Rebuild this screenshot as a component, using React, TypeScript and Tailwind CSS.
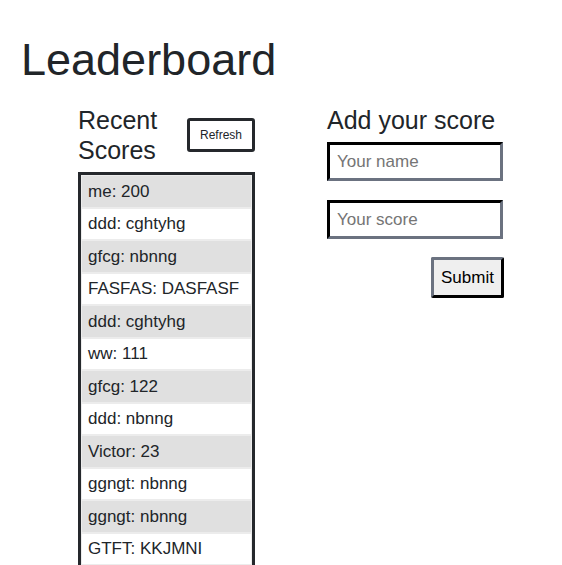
const SCORES = [
  { name: "me", score: "200" },
  { name: "ddd", score: "cghtyhg" },
  { name: "gfcg", score: "nbnng" },
  { name: "FASFAS", score: "DASFASF" },
  { name: "ddd", score: "cghtyhg" },
  { name: "ww", score: "111" },
  { name: "gfcg", score: "122" },
  { name: "ddd", score: "nbnng" },
  { name: "Victor", score: "23" },
  { name: "ggngt", score: "nbnng" },
  { name: "ggngt", score: "nbnng" },
  { name: "GTFT", score: "KKJMNI" },
];

const App = () => {
  return (
    <div
      className="w-full h-[565px] bg-white text-[#212529] pl-[22px] pt-[34px] overflow-hidden"
      style={{ fontFamily: '"Liberation Sans", Arial, sans-serif' }}
    >
      <h1 className="text-[45px] leading-[52px] font-normal -ml-px">Leaderboard</h1>

      <div className="flex gap-[72px] ml-[56px] mt-[19px]">
        {/* recent scores */}
        <div className="w-[177px] flex flex-col">
          <div className="flex items-center justify-between">
            <h2 className="text-[25px] leading-[30px] font-normal">
              Recent
              <br />
              Scores
            </h2>
            <button className="h-[34px] px-[10px] border-[3px] border-[#25282c] rounded-[3px] bg-white text-[12px] text-[#212529]">
              Refresh
            </button>
          </div>
          <ul className="mt-[7px] border-[3px] border-[#25282c] flex flex-col">
            {SCORES.map((s, idx) => (
              <li
                key={idx}
                className={`h-[32.5px] flex items-center pl-[6px] text-[17px] border border-[#ececec] ${
                  idx % 2 === 0 ? "bg-[#e0e0e0]" : "bg-white"
                }`}
              >
                {s.name}: {s.score}
              </li>
            ))}
          </ul>
        </div>

        {/* add score */}
        <div className="w-[177px] flex flex-col">
          <h2 className="text-[25px] leading-[30px] font-normal">Add your score</h2>
          <input
            placeholder="Your name"
            className="mt-[7px] w-[176px] h-[39px] px-[7px] text-[17px] border-[3px] border-t-black border-l-black border-b-[#6b7280] border-r-[#6b7280] outline-none placeholder:text-[#757575]"
          />
          <input
            placeholder="Your score"
            className="mt-[19px] w-[176px] h-[39px] px-[7px] text-[17px] border-[3px] border-t-black border-l-black border-b-[#6b7280] border-r-[#6b7280] outline-none placeholder:text-[#757575]"
          />
          <div className="flex justify-end mt-[18px] w-[177px]">
            <button className="w-[73px] h-[41px] bg-[#efefef] text-[17px] text-black rounded-[2px] border-[3px] border-t-[#6b7280] border-l-[#6b7280] border-b-black border-r-black">
              Submit
            </button>
          </div>
        </div>
      </div>
    </div>
  );
};

export default App;
